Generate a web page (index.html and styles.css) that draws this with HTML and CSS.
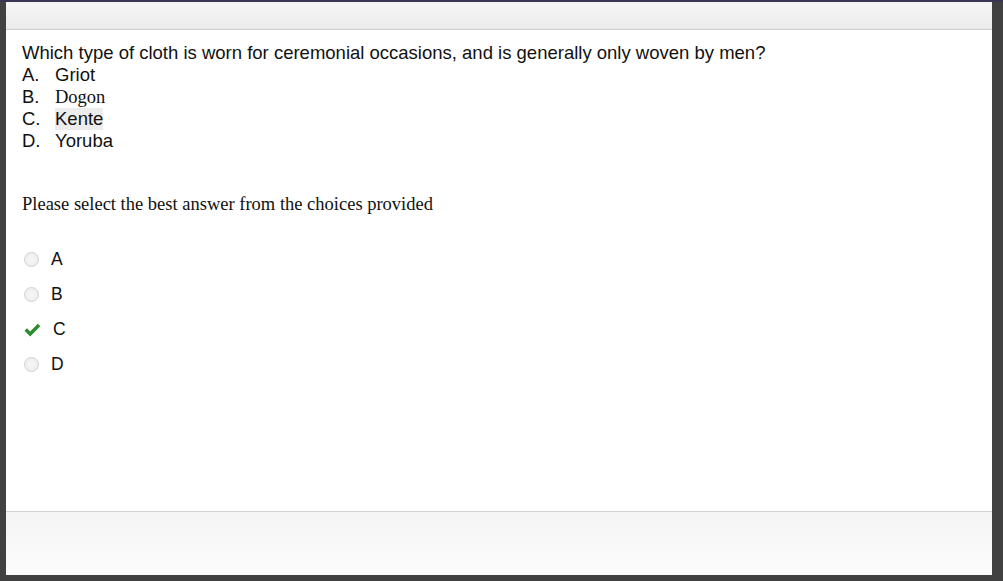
FILE: index.html
```html
<!DOCTYPE html>
<html>
<head>
<meta charset="utf-8">
<link rel="stylesheet" href="styles.css">
</head>
<body>
<div class="frame">
  <div class="topline"></div>
  <div class="panel">
    <div class="header"></div>
    <div class="content">
      <div class="question">
        <p class="stem">Which type of cloth is worn for ceremonial occasions, and is generally only woven by men?</p>
        <ol class="choices">
          <li><span class="lbl">A.</span><span>Griot</span></li>
          <li><span class="lbl">B.</span><span class="serif">Dogon</span></li>
          <li><span class="lbl">C.</span><span class="hl">Kente</span></li>
          <li><span class="lbl">D.</span><span>Yoruba</span></li>
        </ol>
      </div>
      <p class="prompt">Please select the best answer from the choices provided</p>
      <ul class="answers">
        <li><span class="radio"></span><span class="opt">A</span></li>
        <li><span class="radio"></span><span class="opt">B</span></li>
        <li><span class="check"><svg width="17" height="14" viewBox="0 0 17 14"><path d="M0.5 7.8 L3 5.3 L6.2 8.4 L13.8 0.8 L16.3 3.3 L6.2 13.4 Z" fill="#2e8b2e"/></svg></span><span class="opt">C</span></li>
        <li><span class="radio"></span><span class="opt">D</span></li>
      </ul>
    </div>
    <div class="footer"></div>
  </div>
</div>
</body>
</html>
```
FILE: styles.css
```css
html, body {
  margin: 0;
  padding: 0;
}
body {
  background: #414141;
  width: 1003px;
  height: 581px;
  overflow: hidden;
}
.frame {
  display: flex;
  flex-direction: column;
}
.topline {
  height: 2px;
  background: #3b3656;
}
.panel {
  margin-left: 6px;
  width: 986px;
  height: 573px;
  background: #fff;
  display: flex;
  flex-direction: column;
}
.header {
  height: 27px;
  background: linear-gradient(#f6f6f8, #ebebeb);
  border-bottom: 1px solid #cdcdcd;
}
.content {
  flex: 1;
  padding: 12px 16px 0 16px;
  font-family: "Liberation Sans", Arial, sans-serif;
  color: #111;
}
.stem {
  margin: 0;
  font-size: 18.5px;
  line-height: 22px;
}
.choices {
  list-style: none;
  margin: 0;
  padding: 0;
  font-size: 18.5px;
  line-height: 22px;
}
.choices li {
  display: flex;
}
.lbl {
  width: 33px;
}
.serif {
  font-family: "Liberation Serif", "Times New Roman", serif;
}
.hl {
  background: #ececec;
}
.prompt {
  margin: 41px 0 0 0;
  font-family: "Liberation Serif", "Times New Roman", serif;
  font-size: 18.5px;
  line-height: 22px;
}
.answers {
  list-style: none;
  margin: 27px 0 0 0;
  padding: 0;
}
.answers li {
  display: flex;
  align-items: center;
  height: 35px;
  font-size: 17.5px;
}
.radio {
  border-radius: 50%;
  border: 1px solid #d2d2d2;
  background: radial-gradient(#f7f7f7, #eaeaea);
  margin-left: 2px;
  margin-right: 12px;
  box-sizing: border-box;
  flex: none;
  width: 15px;
  height: 15px;
}
.check {
  width: 17px;
  height: 14px;
  margin-left: 2px;
  margin-right: 12px;
  display: flex;
}
.opt {
  color: #111;
}
.footer {
  height: 63px;
  border-top: 1px solid #d2d2d2;
  background: linear-gradient(#f4f4f4, #fcfcfc);
}
```
